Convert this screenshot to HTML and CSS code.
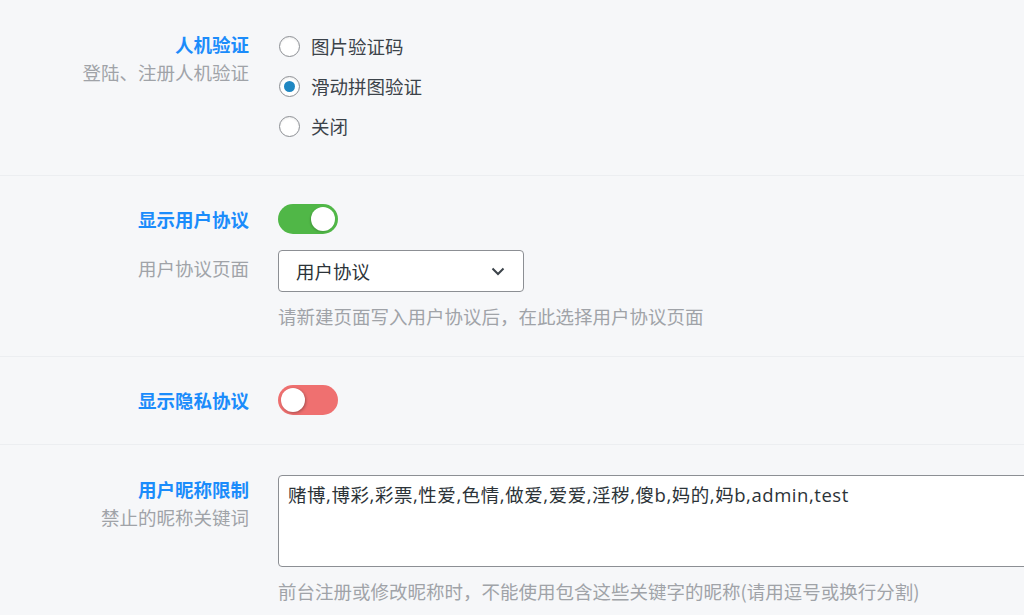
FILE: index.html
```html
<!DOCTYPE html>
<html lang="zh-CN">
<head>
<meta charset="utf-8">
<title>设置</title>
<link rel="stylesheet" href="styles.css">
</head>
<body>
<div class="page">
  <section class="section s1">
    <div class="row">
      <div class="label label-pad">
        <div class="title">人机验证</div>
        <div class="sub">登陆、注册人机验证</div>
      </div>
      <div class="control">
        <label class="radio"><span class="dot"></span><span>图片验证码</span></label>
        <label class="radio"><span class="dot checked"></span><span>滑动拼图验证</span></label>
        <label class="radio"><span class="dot"></span><span>关闭</span></label>
      </div>
    </div>
  </section>

  <section class="section s2">
    <div class="row">
      <div class="label"><div class="title tline">显示用户协议</div></div>
      <div class="control"><span class="toggle on"><span class="knob"></span></span></div>
    </div>
    <div class="row row-gap">
      <div class="label"><div class="sub sub-top">用户协议页面</div></div>
      <div class="control">
        <div class="select">
          <span>用户协议</span>
          <svg class="chev" width="14" height="9" viewBox="0 0 14 9"><path d="M1.5 1.5 L7 7 L12.5 1.5" fill="none" stroke="#3c434a" stroke-width="2"/></svg>
        </div>
        <div class="help">请新建页面写入用户协议后，在此选择用户协议页面</div>
      </div>
    </div>
  </section>

  <section class="section s3">
    <div class="row">
      <div class="label"><div class="title tline">显示隐私协议</div></div>
      <div class="control"><span class="toggle off"><span class="knob"></span></span></div>
    </div>
  </section>

  <section class="section s4">
    <div class="row">
      <div class="label">
        <div class="title">用户昵称限制</div>
        <div class="sub">禁止的昵称关键词</div>
      </div>
      <div class="control">
        <div class="textarea">赌博,博彩,彩票,性爱,色情,做爱,爱爱,淫秽,傻b,妈的,妈b,admin,test</div>
        <div class="help">前台注册或修改昵称时，不能使用包含这些关键字的昵称(请用逗号或换行分割)</div>
      </div>
    </div>
  </section>
</div>
</body>
</html>
```

FILE: styles.css
```css
html, body {
  margin: 0;
  padding: 0;
  background: #f6f7f9;
  overflow: hidden;
}
body {
  width: 1024px;
  height: 615px;
  font-family: "Open Sans", "Noto Sans CJK SC", sans-serif;
  font-size: 18.5px;
  color: #3c434a;
}
.page {
  width: 1024px;
}
.section {
  border-bottom: 1px solid #eceef1;
}
.s1 { padding: 26px 0 29px; }
.s2 { padding: 28px 0 26px; }
.s3 { padding: 28px 0 29px; }
.s4 { padding: 30px 0 0; border-bottom: none; }

.row {
  display: grid;
  grid-template-columns: 249px 1fr;
  column-gap: 29px;
}
.row-gap { margin-top: 16px; }

.label {
  text-align: right;
  line-height: 28px;
}
.label-pad { padding-top: 4px; }
.title {
  color: #1b8cfb;
  font-weight: 700;
  font-family: "Noto Sans CJK SC", sans-serif;
}
.tline { line-height: 30px; }
.sub {
  color: #a0a3a8;
  font-family: "Noto Sans CJK SC", sans-serif;
}
.sub-top { padding-top: 4px; }

.control {
  min-width: 0;
}

.radio {
  display: flex;
  align-items: center;
  height: 40px;
  font-family: "Noto Sans CJK SC", sans-serif;
}
.dot {
  box-sizing: border-box;
  width: 21px;
  height: 21px;
  border-radius: 50%;
  border: 1px solid #8c8f94;
  background: #fff;
  margin: 0 11px 0 1px;
  position: relative;
  box-shadow: inset 0 1px 2px rgba(0,0,0,0.08);
}
.dot.checked::after {
  content: "";
  position: absolute;
  left: 4px;
  top: 4px;
  width: 11px;
  height: 11px;
  border-radius: 50%;
  background: #1f87c2;
}

.toggle {
  display: block;
  position: relative;
  width: 60px;
  height: 30px;
  border-radius: 15px;
}
.toggle.on { background: #50b747; }
.toggle.off { background: #ef7070; }
.knob {
  position: absolute;
  top: 3px;
  width: 24px;
  height: 24px;
  border-radius: 50%;
  background: #fff;
}
.toggle.on .knob { right: 3px; box-shadow: -1px 1px 2px rgba(0,0,0,0.15); }
.toggle.off .knob { left: 3px; box-shadow: 1px 1px 3px rgba(0,0,0,0.3); }

.select {
  box-sizing: border-box;
  width: 246px;
  height: 42px;
  border: 1px solid #8c8f94;
  border-radius: 4px;
  background: #fff;
  display: flex;
  align-items: center;
  justify-content: space-between;
  padding: 0 18px 0 17px;
  font-family: "Noto Sans CJK SC", sans-serif;
  color: #2c3338;
}
.chev { display: block; }

.help {
  margin-top: 10px;
  line-height: 28px;
  color: #a0a3a8;
  font-family: "Noto Sans CJK SC", sans-serif;
}

.textarea {
  box-sizing: border-box;
  width: 800px;
  height: 92px;
  border: 1px solid #8c8f94;
  border-radius: 4px;
  background: #fff;
  padding: 5px 9px;
  line-height: 28px;
  letter-spacing: 0.55px;
  color: #2c3338;
}
```
